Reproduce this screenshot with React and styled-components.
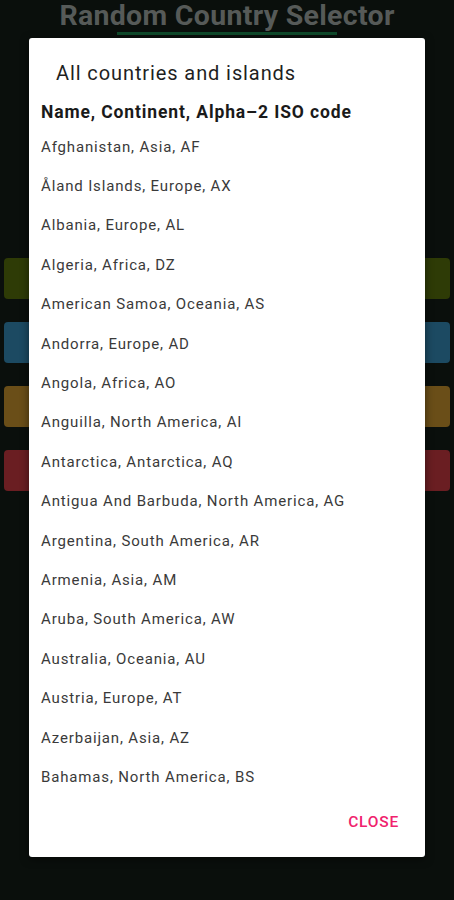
import React from 'react'
import styled, { createGlobalStyle } from 'styled-components'

const GlobalStyle = createGlobalStyle`
    html, body {
        margin: 0;
        padding: 0;
        background: #0a0f0c;
    }
    body {
        font-family: Roboto, "Noto Sans", sans-serif;
    }
`

const Screen = styled.div`
    position: relative;
    width: 454px;
    height: 900px;
    overflow: hidden;
    background: #0a0f0c;
`

const Header = styled.div`
    display: flex;
    flex-direction: column;
    align-items: center;
    padding-top: 1px;
`

const AppTitle = styled.div`
    font-size: 28.5px;
    font-weight: bold;
    color: #565a58;
    line-height: 30px;
    letter-spacing: 0.3px;
`

const Underline = styled.div`
    width: 220px;
    height: 3px;
    background: #0e4a2b;
    margin-top: 1px;
`

const Buttons = styled.div`
    display: flex;
    flex-direction: column;
    gap: 23px;
    padding: 0 4px;
    margin-top: 223px;
`

const ColorButton = styled.div`
    height: 41px;
    border-radius: 4px;
    background: ${props => props.color};
`

const Dialog = styled.div`
    position: absolute;
    left: 29px;
    top: 38px;
    width: 396px;
    height: 819px;
    box-sizing: border-box;
    background: #ffffff;
    border-radius: 3px;
    box-shadow: 0 2px 8px rgba(0, 0, 0, 0.5);
    display: flex;
    flex-direction: column;
    padding: 23px 0 17px 12px;
`

const DialogTitle = styled.div`
    font-size: 20px;
    color: #1f1f1f;
    line-height: 24px;
    padding-left: 15px;
    letter-spacing: 0.9px;
`

const ColumnHeader = styled.div`
    font-size: 17.5px;
    font-weight: bold;
    color: #1a1a1a;
    line-height: 22px;
    margin-top: 16px;
    letter-spacing: 0.88px;
`

const List = styled.div`
    display: flex;
    flex-direction: column;
    margin-top: 4px;
`

const Row = styled.div`
    height: 39.4px;
    display: flex;
    align-items: center;
    font-size: 15px;
    color: #3a3a3a;
    letter-spacing: 0.85px;
`

const Actions = styled.div`
    display: flex;
    justify-content: flex-end;
    margin-top: auto;
    padding-right: 26px;
`

const CloseButton = styled.div`
    height: 36px;
    display: flex;
    align-items: center;
    font-size: 15.5px;
    font-weight: 500;
    color: #f0226d;
    letter-spacing: 0.8px;
`

const countries = [
    'Afghanistan, Asia, AF',
    'Åland Islands, Europe, AX',
    'Albania, Europe, AL',
    'Algeria, Africa, DZ',
    'American Samoa, Oceania, AS',
    'Andorra, Europe, AD',
    'Angola, Africa, AO',
    'Anguilla, North America, AI',
    'Antarctica, Antarctica, AQ',
    'Antigua And Barbuda, North America, AG',
    'Argentina, South America, AR',
    'Armenia, Asia, AM',
    'Aruba, South America, AW',
    'Australia, Oceania, AU',
    'Austria, Europe, AT',
    'Azerbaijan, Asia, AZ',
    'Bahamas, North America, BS',
]

const buttonColors = ['#2e3b06', '#1c4a62', '#6a4e18', '#6a1e22']

export default function App() {
    return (
        <Screen>
            <GlobalStyle />
            <Header>
                <AppTitle>Random Country Selector</AppTitle>
                <Underline />
            </Header>
            <Buttons>
                {buttonColors.map(c => <ColorButton key={c} color={c} />)}
            </Buttons>
            <Dialog>
                <DialogTitle>All countries and islands</DialogTitle>
                <ColumnHeader>Name, Continent, Alpha–2 ISO code</ColumnHeader>
                <List>
                    {countries.map(name => <Row key={name}>{name}</Row>)}
                </List>
                <Actions>
                    <CloseButton>CLOSE</CloseButton>
                </Actions>
            </Dialog>
        </Screen>
    )
}
